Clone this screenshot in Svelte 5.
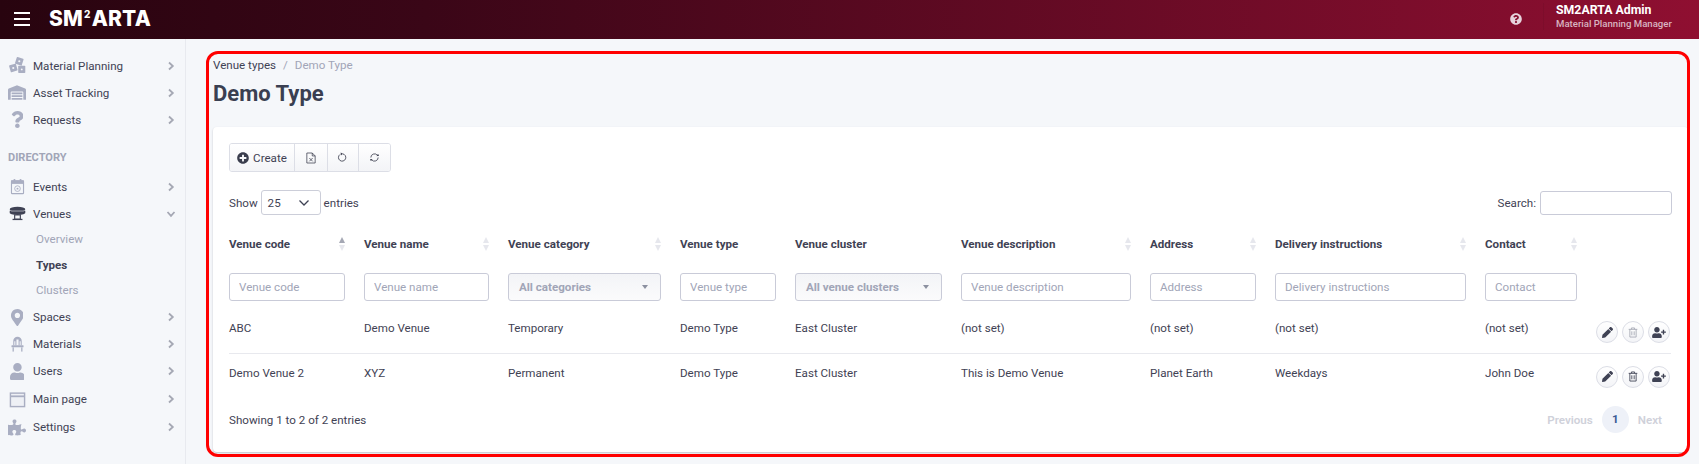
<script>
  const topNav = [
    { label: 'Material Planning', icon: 'blocks' },
    { label: 'Asset Tracking', icon: 'warehouse' },
    { label: 'Requests', icon: 'question' }
  ];

  const columns = [
    { label: 'Venue code', sort: 'asc', width: 135, placeholder: 'Venue code' },
    { label: 'Venue name', sort: 'none', width: 144, placeholder: 'Venue name' },
    { label: 'Venue category', sort: 'none', width: 172, select: 'All categories' },
    { label: 'Venue type', width: 115, placeholder: 'Venue type' },
    { label: 'Venue cluster', width: 166, select: 'All venue clusters' },
    { label: 'Venue description', sort: 'none', width: 189, placeholder: 'Venue description' },
    { label: 'Address', sort: 'none', width: 125, placeholder: 'Address' },
    { label: 'Delivery instructions', sort: 'none', width: 210, placeholder: 'Delivery instructions' },
    { label: 'Contact', sort: 'none', width: 111, placeholder: 'Contact' }
  ];

  const rows = [
    { cells: ['ABC', 'Demo Venue', 'Temporary', 'Demo Type', 'East Cluster', '(not set)', '(not set)', '(not set)', '(not set)'], canDelete: false },
    { cells: ['Demo Venue 2', 'XYZ', 'Permanent', 'Demo Type', 'East Cluster', 'This is Demo Venue', 'Planet Earth', 'Weekdays', 'John Doe'], canDelete: true }
  ];
</script>

{#snippet navIcon(name)}
  {#if name === 'blocks'}
    <svg class="nav-icon" viewBox="0 0 24 24" fill="#a9aec2">
      <rect x="9.500" y="1" width="10" height="10" rx="1" transform="rotate(18 14 6)" />
      <rect x="1" y="10.500" width="10" height="10" rx="1" transform="rotate(-16 6 15)" />
      <rect x="13" y="12.500" width="10" height="10" rx="1" />
      <circle cx="18" cy="17.500" r="1.300" fill="#f5f7fa" />
      <circle cx="6" cy="15.500" r="1.500" fill="#f5f7fa" />
      <circle cx="14.500" cy="6" r="1.500" fill="#f5f7fa" />
    </svg>
  {:else if name === 'warehouse'}
    <svg class="nav-icon" viewBox="0 0 640 512" fill="#a9aec2">
      <path d="M504 352H136.400c-4.400 0-8 3.600-8 8l-.1 48c0 4.400 3.600 8 8 8H504c4.400 0 8-3.600 8-8v-48c0-4.400-3.600-8-8-8zm0 96H136.100c-4.400 0-8 3.600-8 8l-.1 48c0 4.400 3.600 8 8 8h368c4.400 0 8-3.600 8-8v-48c0-4.400-3.600-8-8-8zm0-192H136.600c-4.400 0-8 3.600-8 8l-.1 48c0 4.400 3.600 8 8 8H504c4.400 0 8-3.600 8-8v-48c0-4.400-3.600-8-8-8zm106.500-139L338.400 3.700a48.150 48.150 0 0 0-36.900 0L29.500 117C11.700 124.500 0 141.900 0 161.300V504c0 4.400 3.600 8 8 8h80c4.400 0 8-3.600 8-8V256c0-17.600 14.600-32 32.600-32h382.800c18 0 32.600 14.400 32.600 32v248c0 4.400 3.600 8 8 8h80c4.400 0 8-3.600 8-8V161.300c0-19.400-11.700-36.800-29.500-44.300z" />
    </svg>
  {:else if name === 'question'}
    <svg class="nav-icon" viewBox="0 0 384 512" fill="#a9aec2">
      <path d="M202.021 0C122.202 0 70.503 32.703 29.914 91.026c-7.363 10.58-5.093 25.086 5.178 32.874l43.138 32.709c10.373 7.865 25.132 6.026 33.253-4.148 25.049-31.381 43.63-49.449 82.757-49.449 30.764 0 68.816 19.799 68.816 49.631 0 22.552-18.617 34.134-48.993 51.164-35.423 19.86-82.299 44.576-82.299 106.405V320c0 13.255 10.745 24 24 24h72.471c13.255 0 24-10.745 24-24v-5.773c0-42.86 125.268-44.645 125.268-160.627C377.504 66.256 286.902 0 202.021 0zM192 373.459c-38.196 0-69.271 31.075-69.271 69.271 0 38.195 31.075 69.27 69.271 69.27s69.271-31.075 69.271-69.271-31.075-69.27-69.271-69.27z" />
    </svg>
  {:else if name === 'calendar'}
    <svg class="nav-icon" viewBox="0 0 24 24" fill="none" stroke="#a9aec2">
      <rect x="3.500" y="4" width="17" height="18" rx="1" stroke-width="1.600" />
      <rect x="3.500" y="4" width="17" height="4" fill="#a9aec2" />
      <rect x="6.500" y="1.500" width="2.400" height="4" fill="#a9aec2" stroke="none" />
      <rect x="15.100" y="1.500" width="2.400" height="4" fill="#a9aec2" stroke="none" />
      <circle cx="12" cy="15" r="4" stroke-width="1.200" />
      <circle cx="12" cy="15" r="1.400" fill="#a9aec2" stroke="none" />
    </svg>
  {:else if name === 'venue'}
    <svg class="nav-icon" viewBox="0 0 24 24" fill="#3f4254">
      <ellipse cx="12" cy="6" rx="11" ry="3.400" />
      <path d="M1 8h22v3c0 1.500-4 3-11 3S1 12.500 1 11z" />
      <rect x="8" y="14" width="8" height="6" fill="none" stroke="#3f4254" stroke-width="1.600" />
      <rect x="5" y="19.500" width="14" height="1.800" />
      <path d="M3 8.500h18" stroke="#f5f7fa" stroke-width=".8" />
    </svg>
  {:else if name === 'marker'}
    <svg class="nav-icon" viewBox="0 0 384 512" fill="#a9aec2">
      <path d="M172.268 501.67C26.97 291.031 0 272.034 0 192 0 85.961 85.961 0 192 0s192 85.961 192 192c0 80.034-26.97 99.031-172.268 309.67-9.535 13.774-29.93 13.773-39.464 0zM192 272c44.183 0 80-35.817 80-80s-35.817-80-80-80-80 35.817-80 80 35.817 80 80 80z" />
    </svg>
  {:else if name === 'chair'}
    <svg class="nav-icon" viewBox="0 0 24 24" fill="#a9aec2">
      <path d="M6 13V7a6 6 0 0 1 12 0v6h-1.500V7.500h-1.500V13h-1.500V5h-3v8H9V7.500H7.500V13z" />
      <rect x="3.500" y="13" width="17" height="3" rx=".6" />
      <rect x="5" y="16" width="1.800" height="6" />
      <rect x="17.200" y="16" width="1.800" height="6" />
    </svg>
  {:else if name === 'user'}
    <svg class="nav-icon" viewBox="0 0 448 512" fill="#a9aec2">
      <path d="M224 256c70.700 0 128-57.300 128-128S294.700 0 224 0 96 57.300 96 128s57.300 128 128 128zm89.600 32h-16.700c-22.200 10.200-46.900 16-72.900 16s-50.600-5.800-72.900-16h-16.700C60.200 288 0 348.200 0 422.400V464c0 26.500 21.500 48 48 48h352c26.500 0 48-21.500 48-48v-41.600c0-74.200-60.200-134.400-134.400-134.400z" />
    </svg>
  {:else if name === 'window'}
    <svg class="nav-icon" viewBox="0 0 24 24" fill="none" stroke="#a9aec2" stroke-width="2">
      <rect x="2" y="3" width="20" height="19" fill="#eef0f5" />
      <path d="M2 7.500h20" stroke-width="2.500" />
    </svg>
  {:else if name === 'puzzle'}
    <svg class="nav-icon" viewBox="0 0 576 512" fill="#a9aec2">
      <path d="M519.442 288.651c-41.519 0-59.5 31.593-82.058 31.593C377.409 320.244 432 144 432 144s-196.288 80-196.288-3.297c0-35.827 36.288-46.25 36.288-85.985C272 19.216 243.885 0 210.539 0c-34.654 0-66.366 18.891-66.366 56.346 0 41.364 31.711 59.277 31.711 81.75C175.885 207.719 0 166.758 0 166.758v333.237s178.635 41.047 178.635-28.662c0-22.473-40-40.107-40-81.471 0-37.456 29.25-56.346 63.577-56.346 33.673 0 61.788 19.216 61.788 54.717 0 39.735-36.288 50.158-36.288 85.985 0 60.803 129.675 25.73 181.23 25.73 0 0-34.725-120.101 25.827-120.101 35.962 0 46.423 36.152 86.308 36.152C556.712 416 576 387.99 576 354.443c0-34.199-18.962-65.792-56.558-65.792z" />
    </svg>
  {/if}
{/snippet}

{#snippet navRow(label, icon, open)}
  <div class="nav-row">
    <span class="nav-icon-box">{@render navIcon(icon)}</span>
    <span class="nav-label">{label}</span>
    <svg class="chev" class:open viewBox="0 0 10 10" fill="none" stroke="#a5a8b4" stroke-width="1.800">
      <path d="M3 1.500 6.800 5 3 8.500" />
    </svg>
  </div>
{/snippet}

<div class="page">
  <header class="topbar">
    <div class="burger"><span></span><span></span><span></span></div>
    <div class="logo">SM<sup>2</sup>ARTA</div>
    <svg class="help" viewBox="0 0 512 512" fill="#e6d3dc">
      <path d="M504 256c0 136.997-111.043 248-248 248S8 392.997 8 256C8 119.083 119.043 8 256 8s248 111.083 248 248zM262.655 90c-54.497 0-89.255 22.957-116.549 63.758-3.536 5.286-2.353 12.415 2.715 16.258l34.699 26.31c5.205 3.947 12.621 3.008 16.665-2.122 17.864-22.658 30.113-35.797 57.303-35.797 20.429 0 45.698 13.148 45.698 32.958 0 14.976-12.363 22.667-32.534 33.976C247.128 238.528 216 254.941 216 296v4c0 6.627 5.373 12 12 12h56c6.627 0 12-5.373 12-12v-1.333c0-28.462 83.186-29.647 83.186-106.667 0-58.002-60.165-102-116.531-102zM256 338c-25.365 0-46 20.635-46 46 0 25.364 20.635 46 46 46s46-20.636 46-46c0-25.365-20.635-46-46-46z" />
    </svg>
    <div class="account">
      <div class="account-name">SM2ARTA Admin</div>
      <div class="account-role">Material Planning Manager</div>
    </div>
  </header>

  <div class="body">
    <aside class="sidebar">
      {#each topNav as item}
        {@render navRow(item.label, item.icon, false)}
      {/each}
      <div class="section-title">DIRECTORY</div>
      {@render navRow('Events', 'calendar', false)}
      {@render navRow('Venues', 'venue', true)}
      <div class="sub">Overview</div>
      <div class="sub active">Types</div>
      <div class="sub">Clusters</div>
      {@render navRow('Spaces', 'marker', false)}
      {@render navRow('Materials', 'chair', false)}
      {@render navRow('Users', 'user', false)}
      {@render navRow('Main page', 'window', false)}
      {@render navRow('Settings', 'puzzle', false)}
    </aside>

    <main class="main">
      <div class="crumbs">
        <span class="crumb-link">Venue types</span>
        <span class="crumb-sep">/</span>
        <span class="crumb-current">Demo Type</span>
      </div>
      <h1>Demo Type</h1>

      <section class="card">
        <div class="toolbar">
          <button class="tool create">
            <svg viewBox="0 0 512 512" fill="#3a3d4d" width="12" height="12">
              <path d="M256 8C119 8 8 119 8 256s111 248 248 248 248-111 248-248S393 8 256 8zm144 276c0 6.600-5.400 12-12 12h-92v92c0 6.600-5.400 12-12 12h-56c-6.600 0-12-5.400-12-12v-92h-92c-6.600 0-12-5.400-12-12v-56c0-6.600 5.400-12 12-12h92v-92c0-6.600 5.400-12 12-12h56c6.600 0 12 5.400 12 12v92h92c6.600 0 12 5.400 12 12v56z" />
            </svg>
            Create
          </button>
          <button class="tool" aria-label="Export">
            <svg viewBox="0 0 12 14" width="10" height="12" fill="none" stroke="#3a3d4d" stroke-width=".9">
              <path d="M1 1h6.500L11 4.500V13H1zM7.500 1v3.500H11" />
              <path d="M4 7l4 4M8 7l-4 4" />
            </svg>
          </button>
          <button class="tool" aria-label="Reset">
            <svg viewBox="0 0 12 12" width="11" height="11" fill="none" stroke="#3a3d4d" stroke-width=".9">
              <path d="M3.300 2.700A4 4 0 1 0 6 2" />
              <path d="M4 .6 6.300 2 4.300 3.700" fill="#3a3d4d" stroke="none" />
            </svg>
          </button>
          <button class="tool" aria-label="Reload">
            <svg viewBox="0 0 12 12" width="11" height="11" fill="none" stroke="#3a3d4d" stroke-width=".9">
              <path d="M2 6a4 4 0 0 1 7-2.600M10 6a4 4 0 0 1-7 2.600" />
              <path d="M11 4 8.300 4.500 9.800 2zM1 8l2.700-.5L2.200 10z" fill="#3a3d4d" stroke="none" />
            </svg>
          </button>
        </div>

        <div class="table-controls">
          <div class="length">
            Show
            <div class="length-select">
              <span>25</span>
              <svg viewBox="0 0 12 8" width="12" height="8" fill="none" stroke="#3f4254" stroke-width="1.300"><path d="M1.500 1.500 6 6l4.500-4.500" /></svg>
            </div>
            entries
          </div>
          <label class="search">Search: <input type="text" /></label>
        </div>

        <table>
          <colgroup>
            {#each columns as col}
              <col style="width: {col.width}px" />
            {/each}
            <col style="width: 75px" />
          </colgroup>
          <thead>
            <tr class="head-row">
              {#each columns as col}
                <th>
                  <div class="th-inner">
                    <span>{col.label}</span>
                    {#if col.sort}
                      <span class="sort" class:asc={col.sort === 'asc'}><i></i><b></b></span>
                    {/if}
                  </div>
                </th>
              {/each}
              <th></th>
            </tr>
            <tr class="filter-row">
              {#each columns as col}
                <td>
                  {#if col.select}
                    <div class="filter-select">
                      <span>{col.select}</span>
                      <i class="caret"></i>
                    </div>
                  {:else}
                    <input type="text" placeholder={col.placeholder} />
                  {/if}
                </td>
              {/each}
              <td></td>
            </tr>
          </thead>
          <tbody>
            {#each rows as row}
              <tr>
                {#each row.cells as cell}
                  <td>{cell}</td>
                {/each}
                <td class="actions">
                  <div class="action-group">
                    <button class="round" aria-label="Edit">
                      <svg viewBox="0 0 512 512" width="11" height="11" fill="#3f4254">
                        <path d="M497.900 142.100l-46.100 46.100c-4.700 4.700-12.300 4.700-17 0l-111-111c-4.700-4.700-4.700-12.300 0-17l46.100-46.100c18.700-18.700 49.100-18.700 67.900 0l60.100 60.100c18.800 18.700 18.800 49.100 0 67.900zM284.200 99.800L21.600 362.400.4 483.900c-2.900 16.400 11.400 30.600 27.800 27.800l121.500-21.300 262.600-262.600c4.700-4.700 4.700-12.300 0-17l-111-111c-4.800-4.700-12.400-4.700-17.100 0z" />
                      </svg>
                    </button>
                    <button class="round" class:muted={!row.canDelete} aria-label="Delete">
                      <svg viewBox="0 0 12 14" width="10" height="11" fill="none" stroke="currentColor" stroke-width="1.100">
                        <path d="M.5 3h11M4 3V1.200h4V3M2 3v9.800h8V3M4.500 5.500v5M7.500 5.500v5" />
                      </svg>
                    </button>
                    <button class="round" aria-label="Assign">
                      <svg viewBox="0 0 640 512" width="14" height="11" fill="#3f4254">
                        <path d="M624 208h-64v-64c0-8.800-7.200-16-16-16h-32c-8.800 0-16 7.200-16 16v64h-64c-8.800 0-16 7.200-16 16v32c0 8.800 7.200 16 16 16h64v64c0 8.800 7.200 16 16 16h32c8.800 0 16-7.200 16-16v-64h64c8.800 0 16-7.200 16-16v-32c0-8.800-7.200-16-16-16zm-400 48c70.700 0 128-57.300 128-128S294.700 0 224 0 96 57.300 96 128s57.300 128 128 128zm89.600 32h-16.700c-22.200 10.200-46.900 16-72.900 16s-50.600-5.800-72.900-16h-16.700C60.200 288 0 348.200 0 422.400V464c0 26.500 21.500 48 48 48h352c26.500 0 48-21.500 48-48v-41.600c0-74.200-60.200-134.400-134.400-134.400z" />
                      </svg>
                    </button>
                  </div>
                </td>
              </tr>
            {/each}
          </tbody>
        </table>

        <div class="table-footer">
          <div>Showing 1 to 2 of 2 entries</div>
          <div class="pager">
            <span class="page-link">Previous</span>
            <span class="page-current">1</span>
            <span class="page-link">Next</span>
          </div>
        </div>
      </section>
    </main>
  </div>

  <div class="highlight"></div>
</div>

<style>
  :global(body) {
    margin: 0;
    background: #f5f7fa;
  }

  .page {
    position: relative;
    width: 1699px;
    height: 464px;
    overflow: hidden;
    font-family: Roboto, 'Noto Sans', sans-serif;
    font-size: 11.6px;
    line-height: 18px;
    color: #3f4254;
    background: #f5f7fa;
  }

  .topbar {
    height: 39px;
    display: flex;
    align-items: center;
    padding-left: 14px;
    background: linear-gradient(90deg, #28040f 0%, #3a0617 25%, #8f0f31 100%);
    color: #fff;
  }

  .burger {
    width: 16px;
    display: flex;
    flex-direction: column;
    gap: 4px;
    margin-top: -1px;
  }

  .burger span {
    height: 2px;
    background: #fff;
  }

  .logo {
    margin-left: 19px;
    font-family: 'Inter', sans-serif;
    font-weight: 800;
    font-size: 21px;
    line-height: 24px;
    letter-spacing: 0.2px;
    margin-top: -2px;
  }

  .logo sup {
    font-size: 10px;
    line-height: 0;
    vertical-align: 8px;
    margin: 0 1px;
  }

  .help {
    width: 12px;
    height: 12px;
    margin-left: auto;
    margin-top: -2px;
  }

  .account {
    margin-left: 21px;
    padding-left: 12px;
    width: 143px;
    margin-top: -7px;
    border-left: 1px solid rgba(0, 0, 0, 0.06);
  }

  .account-name {
    font-size: 12.3px;
    font-weight: 700;
    line-height: 15px;
  }

  .account-role {
    font-size: 9.6px;
    font-weight: 500;
    line-height: 12px;
    color: #d9b4c1;
    white-space: nowrap;
  }

  .body {
    display: flex;
  }

  .sidebar {
    width: 186px;
    height: 425px;
    box-sizing: border-box;
    flex: none;
    padding-top: 13px;
    border-right: 1px solid #e8eaef;
  }

  .nav-row {
    height: 27px;
    display: flex;
    align-items: center;
    padding-left: 8px;
  }

  .nav-row:nth-last-child(-n + 2) {
    margin-top: 1px;
  }

  .nav-icon-box {
    width: 18px;
    height: 18px;
    display: flex;
    align-items: center;
    justify-content: center;
    margin-right: 7px;
  }

  .nav-icon {
    max-width: 18px;
    height: 17px;
  }

  .nav-label {
    flex: 1;
  }

  .chev {
    width: 10px;
    height: 10px;
    margin-right: 9px;
  }

  .chev.open {
    transform: rotate(90deg);
  }

  .section-title {
    margin: 12px 0 0 8px;
    height: 28px;
    line-height: 26px;
    font-size: 11px;
    font-weight: 700;
    color: #a1a5b7;
  }

  .sub {
    height: 25.5px;
    line-height: 25.5px;
    padding-left: 36px;
    color: #a1a5b7;
  }

  .sub.active {
    font-weight: 700;
    color: #3f4254;
  }

  .main {
    flex: 1;
    padding: 17px 11px 0 27px;
    min-width: 0;
  }

  .crumbs {
    display: flex;
    gap: 7px;
  }

  .crumb-sep,
  .crumb-current {
    color: #a1a5b7;
  }

  h1 {
    margin: 5px 0 19px;
    font-size: 22px;
    line-height: 29px;
    font-weight: 700;
    color: #3a3f51;
  }

  .card {
    height: 325px;
    box-sizing: border-box;
    padding: 16px 16px 0;
    background: #fff;
    border-radius: 4px;
    box-shadow: 0 1px 2px rgba(60, 64, 80, 0.28);
  }

  .toolbar {
    display: flex;
    width: max-content;
    border: 1px solid #dcdee6;
    border-radius: 3px;
    overflow: hidden;
  }

  .tool {
    height: 27px;
    width: 31.5px;
    padding: 0;
    display: flex;
    align-items: center;
    justify-content: center;
    gap: 4px;
    border: 0;
    border-left: 1px solid #dcdee6;
    background: linear-gradient(180deg, #fff, #f3f4f7);
    font: inherit;
    color: #3f4254;
  }

  .tool.create {
    width: 65px;
    border-left: 0;
    border-right: 1px solid #dcdee6;
  }

  .tool.create + .tool {
    border-left: 0;
  }

  .table-controls {
    display: flex;
    justify-content: space-between;
    align-items: center;
    margin-top: 18px;
    height: 25px;
  }

  .length {
    display: flex;
    align-items: center;
    gap: 3px;
  }

  .length-select {
    height: 23px;
    display: flex;
    align-items: center;
    justify-content: space-between;
    padding: 0 10px 0 6px;
    width: 42px;
    border: 1px solid #ccced9;
    border-radius: 3px;
  }

  .search {
    display: flex;
    align-items: center;
    gap: 4px;
  }

  .search input {
    width: 130px;
    height: 22px;
    padding: 0;
    border: 1px solid #c9cbd8;
    border-radius: 3px;
  }

  table {
    width: 1442px;
    margin-top: 13px;
    table-layout: fixed;
    border-collapse: collapse;
  }

  th {
    height: 31px;
    padding: 0 19px 0 0;
    text-align: left;
    font-weight: 700;
    vertical-align: middle;
  }

  .th-inner {
    display: flex;
    justify-content: space-between;
    align-items: center;
    white-space: nowrap;
  }

  .sort {
    display: flex;
    flex-direction: column;
    gap: 2px;
  }

  .sort i,
  .sort b {
    display: block;
    width: 0;
    height: 0;
    border-left: 3.500px solid transparent;
    border-right: 3.500px solid transparent;
  }

  .sort i {
    border-bottom: 6px solid #e6e7ed;
  }

  .sort b {
    border-top: 6px solid #e6e7ed;
  }

  .sort.asc i {
    border-bottom-color: #a5a8b4;
  }

  .filter-row td {
    padding: 14px 19px 18px 0;
    vertical-align: top;
  }

  .filter-row input,
  .filter-select {
    width: 100%;
    height: 28px;
    box-sizing: border-box;
    border: 1px solid #c9cbd8;
    border-radius: 3px;
  }

  .filter-row input {
    display: block;
    padding: 0 9px;
    font: inherit;
    color: #3f4254;
    outline: none;
  }

  .filter-row input::placeholder {
    color: #a1a5b7;
    opacity: 1;
  }

  .filter-select {
    display: flex;
    align-items: center;
    justify-content: space-between;
    padding: 0 12px 0 10px;
    font-weight: 700;
    color: #a1a5b7;
    background: linear-gradient(180deg, #f3f4f7, #fbfbfc);
  }

  .caret {
    width: 0;
    height: 0;
    border-left: 3px solid transparent;
    border-right: 3px solid transparent;
    border-top: 4px solid #8c90a0;
  }

  tbody tr {
    height: 40px;
  }

  tbody tr:first-child {
    height: 34px;
  }

  tbody td {
    padding: 10px 19px 0 0;
    vertical-align: top;
  }

  tbody tr:first-child td {
    padding-top: 0;
  }

  tbody tr + tr td {
    border-top: 1px solid #e8e9ee;
  }

  td.actions {
    padding-right: 0;
    padding-top: 12px;
  }

  tbody tr:first-child td.actions {
    padding-top: 2px;
  }

  .action-group {
    display: flex;
    gap: 4px;
  }

  .round {
    width: 22px;
    height: 22px;
    flex: none;
    padding: 0;
    display: flex;
    align-items: center;
    justify-content: center;
    border-radius: 50%;
    border: 1px solid #dcdee6;
    background: linear-gradient(180deg, #fff, #f3f4f7);
    color: #3f4254;
  }

  .round.muted {
    color: #a5a8b4;
  }

  .table-footer {
    display: flex;
    justify-content: space-between;
    align-items: center;
    margin-top: 13px;
    margin-right: 10px;
  }

  .pager {
    display: flex;
    align-items: center;
    gap: 9px;
  }

  .page-link {
    font-weight: 600;
    color: #cfd1da;
  }

  .page-current {
    width: 27px;
    height: 27px;
    line-height: 27px;
    text-align: center;
    border-radius: 50%;
    background: #eef1f8;
    color: #3a5a94;
    font-weight: 700;
  }

  .highlight {
    position: absolute;
    left: 206px;
    top: 51px;
    width: 1478px;
    height: 400px;
    border: 3px solid #f00;
    border-radius: 12px;
    pointer-events: none;
  }
</style>
